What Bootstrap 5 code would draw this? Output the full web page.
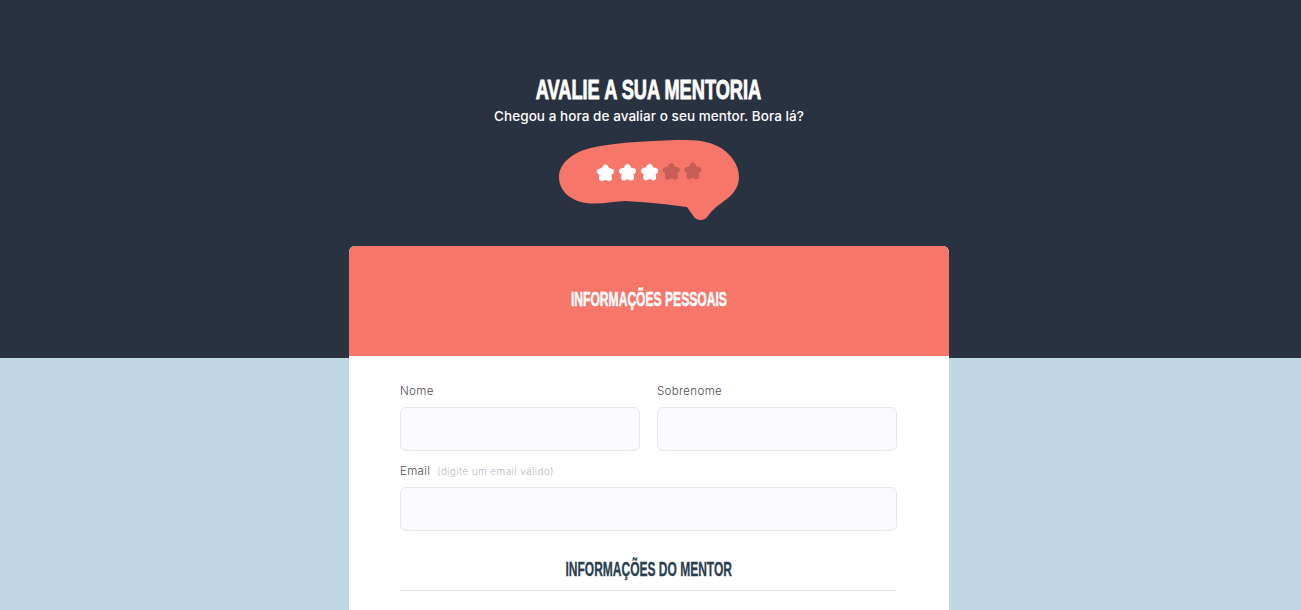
<!DOCTYPE html>
<html lang="pt-BR">
<head>
<meta charset="utf-8">
<meta name="viewport" content="width=device-width, initial-scale=1">
<title>Avalie a sua mentoria</title>
<link href="https://cdn.jsdelivr.net/npm/bootstrap@5.3.0/dist/css/bootstrap.min.css" rel="stylesheet">
<style>
html, body { height: 100%; overflow: hidden; }
body { font-family: Inter, "Open Sans", sans-serif; background: linear-gradient(#293241 358px, #bfd6e3 358px); padding-right: 3px; }
.page-top { height: 246px; padding-top: 74px; }
.display-title { display: block; width: max-content; margin: 0 auto; font-family: "Liberation Sans", sans-serif; font-weight: 700; white-space: nowrap; text-transform: uppercase; }
.page-title { font-size: 28px; line-height: 32px; transform: translateX(-1px) scaleX(.65); -webkit-text-stroke: .9px currentColor; }
.tagline { font-size: 13.5px; font-weight: 500; line-height: 20px; letter-spacing: .06px; }
.bubble { width: 180px; height: 80px; margin-top: 14px; }
.form-card { width: 600px; height: 364px; border-radius: 6px 6px 0 0; }
.card-top { height: 110px; background: #f6766a; border-radius: 6px 6px 0 0; padding-top: 41px; }
.section-title { font-size: 20px; line-height: 24px; transform: scaleX(.6); -webkit-text-stroke: .3px currentColor; }
.card-top .section-title { transform: scaleX(.605); -webkit-text-stroke-width: .5px; }
.form-body { padding: 25px 52px 0 51px; }
.form-label { display: block; font-size: 11.5px; font-weight: 300; line-height: 20px; margin-bottom: 6px; color: #4e4958; letter-spacing: .35px; }
.hint { font-size: 10px; color: #b7b5c6; margin-left: 3px; letter-spacing: .4px; }
.form-control { height: 44px; background: #fafafc; border: 1px solid #e6e6f0; border-radius: 6px; }
.name-row { gap: 17px; margin-bottom: 10px; }
.mentor { margin-top: 26px; padding-bottom: 9px; border-bottom: 1px solid #e6e6f0; color: #293d51; }
</style>
</head>
<body>
<header class="page-top text-white text-center">
  <h1 class="display-title page-title">Avalie a sua mentoria</h1>
  <p class="tagline mb-0">Chegou a hora de avaliar o seu mentor. Bora lá?</p>
  <svg class="bubble d-block mx-auto" viewBox="0 0 180 80" aria-hidden="true">
    <defs><path id="star" d="M0-5.6 1.8-2.5 5.6-1.5 3 1 3.6 5.1 0 3.3-3.6 5.1-3 1-5.6-1.5-1.8-2.5Z" stroke-width="5.8" stroke-linejoin="round"/></defs>
    <path fill="#f6766a" d="M0 37C0 25 11 12 36 7C62 2 101 0 127 0C143 0 154 3 162 8C173 15 180 26 180 37C180 47 174 55 165 61C157 67 152 71 149 76C146 81 138 81 135 77L128 67C107 64 85 62 66 61C55 61 42 65 27 63C13 61 0 52 0 37Z"/>
    <g fill="#fff" stroke="#fff"><use href="#star" x="46.4" y="33"/><use href="#star" x="68.5" y="32.5"/><use href="#star" x="90.6" y="32.4"/></g>
    <g fill="#c75f57" stroke="#c75f57"><use href="#star" x="112.4" y="31.6"/><use href="#star" x="133.9" y="31.2"/></g>
  </svg>
</header>
<main class="form-card mx-auto bg-white">
  <div class="card-top text-white"><h2 class="display-title section-title">Informações pessoais</h2></div>
  <form class="form-body">
    <div class="name-row d-flex">
      <div class="flex-fill"><label class="form-label" for="nome">Nome</label><input class="form-control" id="nome"></div>
      <div class="flex-fill"><label class="form-label" for="sobrenome">Sobrenome</label><input class="form-control" id="sobrenome"></div>
    </div>
    <label class="form-label" for="email">Email <span class="hint">(digite um email válido)</span></label>
    <input class="form-control" id="email" type="email">
    <div class="mentor"><h2 class="display-title section-title">Informações do mentor</h2></div>
  </form>
</main>
<script src="https://cdn.jsdelivr.net/npm/bootstrap@5.3.0/dist/js/bootstrap.bundle.min.js"></script>
</body>
</html>
